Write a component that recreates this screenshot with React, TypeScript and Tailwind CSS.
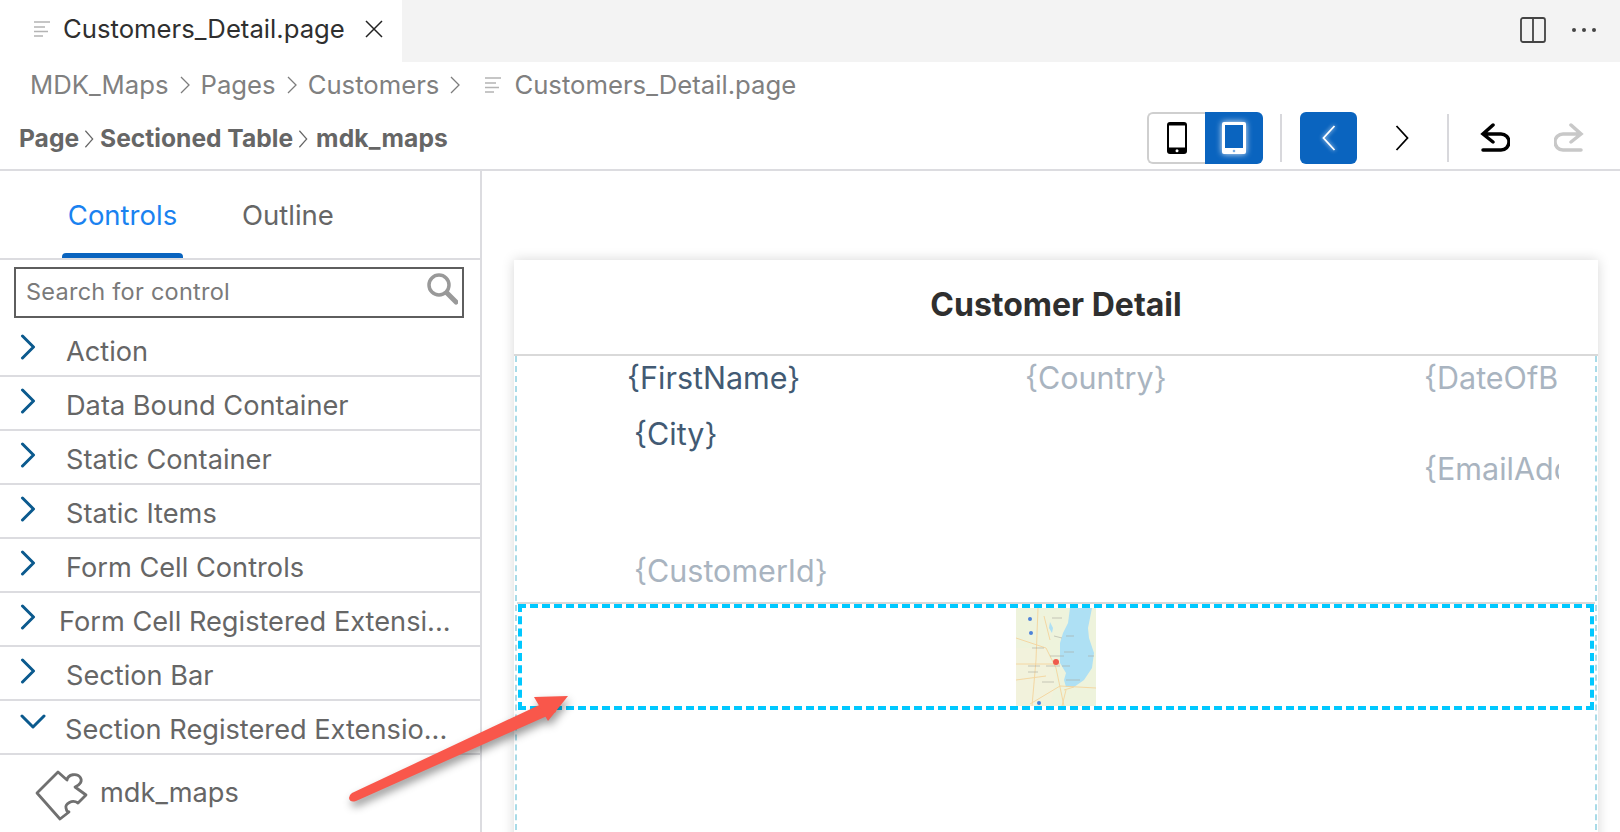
import React from "react";

const Doc = ({ className }: { className: string }) => (
  <svg viewBox="0 0 18 18" className={className} fill="none" stroke="#b4b4b4" strokeWidth="1.6">
    <path d="M1 2h16M1 7h11M1 11.500h14M1 16h9" />
  </svg>
);

const Crumb = () => (
  <svg viewBox="0 0 12 20" className="h-[20px] w-[12px] shrink-0" fill="none" stroke="#7d7d7d" strokeWidth="1.3">
    <path d="M2 2l8 8-8 8" />
  </svg>
);

const CrumbBold = () => (
  <svg viewBox="0 0 12 22" className="mx-[5px] h-[22px] w-[11px] shrink-0" fill="none" stroke="#666" strokeWidth="1.3">
    <path d="M1.500 2l8 9-8 9" />
  </svg>
);

const rows = [
  ["Action", "pl-[66px]"],
  ["Data Bound Container", "pl-[66px]"],
  ["Static Container", "pl-[66px]"],
  ["Static Items", "pl-[66px]"],
  ["Form Cell Controls", "pl-[66px]"],
  ["Form Cell Registered Extensi...", "pl-[59px]"],
  ["Section Bar", "pl-[66px]"],
];

function MapThumb() {
  return (
    <svg viewBox="0 0 80 98" className="h-[98px] w-[80px] blur-[0.7px]">
      <rect width="80" height="98" fill="#eef3dc" />
      <path d="M0 40h30l10 30-6 28H0z" fill="#f2f2dc" />
      <path d="M54 0H76L72 20 73 30 78 45 76 60 68 72 58 79 50 79 48 72 50 65 44 55 44 35 47 25 52 15Z" fill="#aee0f4" />
      <path d="M34 14l3 6-1 5-3-5z" fill="#aee0f4" />
      <g fill="none" stroke="#f4d49c" strokeWidth="0.9">
        <path d="M0 56h44M22 0l-2 52-4 46M0 30l30 10 10 20 8 38M14 96l30-18 36 2M50 82l-4 16M28 8l6 24M0 72l30-4M48 82l10-3" />
      </g>
      <g fill="none" stroke="#a9a9a0" strokeWidth="0.6">
        <path d="M16 40h12M34 48h14M12 58h12M12 64h10M30 58h14M26 74h12M50 72h14M46 58h8M48 44h10M50 28h8M38 28l8 2M36 10h10M72 48h6" />
      </g>
      <circle cx="40" cy="54" r="3" fill="#ef5a4c" />
      <circle cx="14" cy="11" r="2" fill="#4d82d8" />
      <circle cx="15" cy="25" r="2" fill="#4d82d8" />
      <circle cx="23" cy="95" r="2" fill="#4d82d8" />
    </svg>
  );
}

export default function App() {
  return (
    <div className="relative h-[832px] w-[1620px] overflow-hidden bg-white font-['Inter',sans-serif] text-[#666]">
      <div className="flex h-[62px] items-center justify-between bg-[#f3f3f3]">
        <div className="flex h-full w-[402px] items-center bg-white pb-[4px] pl-[33px]">
          <Doc className="h-[18px] w-[18px]" />
          <span className="ml-[12px] text-[25.700px] leading-none text-[#2f2f2f]">Customers_Detail.page</span>
          <svg viewBox="0 0 18 18" className="ml-[20px] h-[18px] w-[18px]" fill="none" stroke="#222" strokeWidth="1.500">
            <path d="M1 1l16 16M17 1L1 17" />
          </svg>
        </div>
        <div className="flex items-center pb-[3px] pr-[24px]">
          <svg viewBox="0 0 26 26" className="h-[26px] w-[26px]" fill="none" stroke="#444" strokeWidth="1.800">
            <rect x="1" y="1" width="24" height="24" rx="2" />
            <path d="M13 1v24" />
          </svg>
          <div className="ml-[26px] flex w-[24px] justify-between">
            <span className="h-[4px] w-[4px] rounded-full bg-[#444]" />
            <span className="h-[4px] w-[4px] rounded-full bg-[#444]" />
            <span className="h-[4px] w-[4px] rounded-full bg-[#444]" />
          </div>
        </div>
      </div>

      <div className="flex h-[46px] items-center gap-[10px] pl-[30px] text-[25.700px] leading-none text-[#808080]">
        <span>MDK_Maps</span>
        <Crumb />
        <span>Pages</span>
        <Crumb />
        <span>Customers</span>
        <Crumb />
        <Doc className="ml-[13px] h-[18px] w-[18px]" />
        <span className="ml-[2px]">Customers_Detail.page</span>
      </div>

      <div className="flex h-[63px] items-center justify-between border-b-2 border-[#dcdce0] pl-[19px]">
        <div className="flex items-center text-[24.600px] font-bold leading-none text-[#666]">
          <span>Page</span>
          <CrumbBold />
          <span>Sectioned Table</span>
          <CrumbBold />
          <span className="ml-[2px] tracking-[0.15px]">mdk_maps</span>
        </div>
        <div className="flex items-center pb-[2px] pr-[36px]">
          <div className="flex h-[52px] w-[116px]">
            <div className="flex w-[58px] items-center justify-center rounded-l-[6px] border-2 border-r-0 border-[#cfcfcf]">
              <svg viewBox="0 0 20 32" className="h-[32px] w-[20px]">
                <rect width="20" height="32" rx="3" fill="#000" />
                <rect x="2" y="3.500" width="16" height="22" fill="#fff" />
                <circle cx="10" cy="28.700" r="1.500" fill="#fff" />
              </svg>
            </div>
            <div className="flex w-[58px] items-center justify-center rounded-r-[6px] bg-[#0a64bf]">
              <svg viewBox="0 0 24 32" className="h-[32px] w-[24px] drop-shadow-[0_0_3px_rgba(255,255,255,0.9)]">
                <rect width="24" height="32" rx="2" fill="#fff" />
                <rect x="3" y="3" width="18" height="23" fill="#0a64bf" />
                <circle cx="12" cy="29" r="1.300" fill="#7fb0e6" />
              </svg>
            </div>
          </div>
          <div className="ml-[17px] h-[48px] w-[2px] bg-[#d8d8dc]" />
          <div className="ml-[18px] flex h-[52px] w-[57px] items-center justify-center rounded-[6px] bg-[#0a64bf]">
            <svg viewBox="0 0 14 26" className="h-[26px] w-[14px] drop-shadow-[0_0_2px_rgba(255,255,255,0.9)]" fill="none" stroke="#fff" strokeWidth="1.800">
              <path d="M12.500 1L1.500 13l11 12" />
            </svg>
          </div>
          <svg viewBox="0 0 14 26" className="ml-[38px] h-[26px] w-[14px]" fill="none" stroke="#000" strokeWidth="1.800">
            <path d="M1.500 1l11 12-11 12" />
          </svg>
          <div className="ml-[38px] h-[48px] w-[2px] bg-[#d8d8dc]" />
          <svg viewBox="0 0 30 30" className="ml-[31px] h-[30px] w-[30px]" fill="none" stroke="#000" strokeWidth="3.500" strokeLinecap="round">
            <path d="M13 2L3 11l10 8M4 11h17a6 6 0 0 1 0 16H3" />
          </svg>
          <svg viewBox="0 0 30 30" className="ml-[44px] h-[30px] w-[30px]" fill="none" stroke="#c8c8c8" strokeWidth="3.500" strokeLinecap="round">
            <path d="M17 2l10 9-10 8M26 11H9a6 6 0 0 0 0 16h18" />
          </svg>
        </div>
      </div>

      <div className="flex h-[661px]">
        <aside className="h-full w-[482px] shrink-0 border-r-2 border-[#dcdce0]">
          <div className="flex h-[89px] border-b-2 border-[#dcdce0] pl-[62px] pt-[2px] text-[27.500px] leading-none">
            <div className="relative flex h-full w-[121px] items-center justify-center text-[#1a82f0]">
              Controls
              <span className="absolute bottom-0 left-0 right-0 h-[5px] rounded-t-[4px] bg-[#0a64bf]" />
            </div>
            <div className="ml-[59px] flex h-full items-center text-[#666]">Outline</div>
          </div>
          <div className="ml-[14px] mr-[16px] mt-[7px] flex h-[51px] items-center justify-between border-2 border-[#5e5e5e] pl-[10px] pr-[4px] text-[23.500px] tracking-[0.25px] text-[#7a7a7a]">
            <span className="pb-[2px]">Search for control</span>
            <svg viewBox="0 0 32 34" className="mb-[7px] h-[34px] w-[32px] blur-[0.5px]" fill="none">
              <circle cx="13" cy="13" r="10" stroke="#999" strokeWidth="3.500" />
              <path d="M21 21l9 9" stroke="#999" strokeWidth="5" strokeLinecap="round" />
            </svg>
          </div>
          <div className="mt-[5px]">
            {rows.map(([label, pad]) => (
              <div key={label} className={`relative flex h-[54px] items-center border-b-2 border-[#dcdce0] pt-[5px] text-[27.200px] leading-none text-[#666] ${pad}`}>
                <svg viewBox="0 0 16 26" className="absolute left-[20px] top-[11px] h-[26px] w-[16px]" fill="none" stroke="#0b5a8e" strokeWidth="3" strokeLinecap="round" strokeLinejoin="round">
                  <path d="M2.500 2l11 11-11 11" />
                </svg>
                <span>{label}</span>
              </div>
            ))}
            <div className="relative flex h-[54px] items-center border-b-2 border-[#dcdce0] pl-[65px] pt-[5px] text-[27.200px] leading-none text-[#666]">
              <svg viewBox="0 0 26 16" className="absolute left-[20px] top-[13px] h-[16px] w-[26px]" fill="none" stroke="#0b5a8e" strokeWidth="3" strokeLinecap="round" strokeLinejoin="round">
                <path d="M2 2l11 11L24 2" />
              </svg>
              <span>Section Registered Extensio...</span>
            </div>
            <div className="flex h-[76px] items-center pl-[35px] text-[27.200px] leading-none text-[#666]">
              <svg viewBox="10 7 53 51" className="mt-[5px] h-[51px] w-[53px] shrink-0 blur-[0.4px]" fill="none" stroke="#707070" strokeWidth="2.800" strokeLinejoin="round">
                <path d="M12 30L33 9L42 17C43 11 52 10 55 14C58 18 55 22 50 24L61 32L53 40C47 36 40 41 41 45C41.500 48 43 49 44 49L35 56Z" />
              </svg>
              <span className="ml-[12px]">mdk_maps</span>
            </div>
          </div>
        </aside>

        <main className="min-w-0 flex-1 bg-white pl-[32px] pt-[89px]">
          <div className="h-[600px] w-[1084px] bg-white shadow-[0_0_12px_rgba(0,0,0,0.16)]">
            <div className="flex h-[96px] items-center justify-center border-b-2 border-[#d9d9d9] pb-[4px] text-[32px] font-bold leading-none text-[#2f2f2f]">
              Customer Detail
            </div>
            <div className="mx-[1px] h-[504px] border-x-2 border-dashed border-[#a9dbe8]">
              <div className="grid h-[248px] grid-cols-[398px_399px_135px] border-b-2 border-[#d9d9d9] pl-[110px] pt-[4px] text-[30.500px] leading-[36px] text-[#a9b4c0]">
                <div className="text-[#425a73]">
                  <div>{"{FirstName}"}</div>
                  <div className="ml-[7px] mt-[20px]">{"{City}"}</div>
                  <div className="ml-[7px] mt-[101px] text-[#a9b4c0]">{"{CustomerId}"}</div>
                </div>
                <div>{"{Country}"}</div>
                <div className="overflow-hidden whitespace-nowrap">
                  <div>{"{DateOfBirth}"}</div>
                  <div className="mt-[55px]">{"{EmailAddress}"}</div>
                </div>
              </div>
              <div className="mx-[1px] flex h-[106px] justify-center border-[4px] border-dashed border-[#00c8ff]">
                <MapThumb />
              </div>
            </div>
          </div>
        </main>
      </div>

      <svg viewBox="0 0 1620 832" className="pointer-events-none absolute left-0 top-0 h-[832px] w-[1620px] drop-shadow-[2px_5px_4px_rgba(0,0,0,0.4)]">
        <path d="M352 793L550 700L556 712L356 801Q350 803 349 798Q349 795 352 793Z" fill="#f9574b" />
        <path d="M568 696L534 697L548 721Z" fill="#f9574b" />
      </svg>
    </div>
  );
}
